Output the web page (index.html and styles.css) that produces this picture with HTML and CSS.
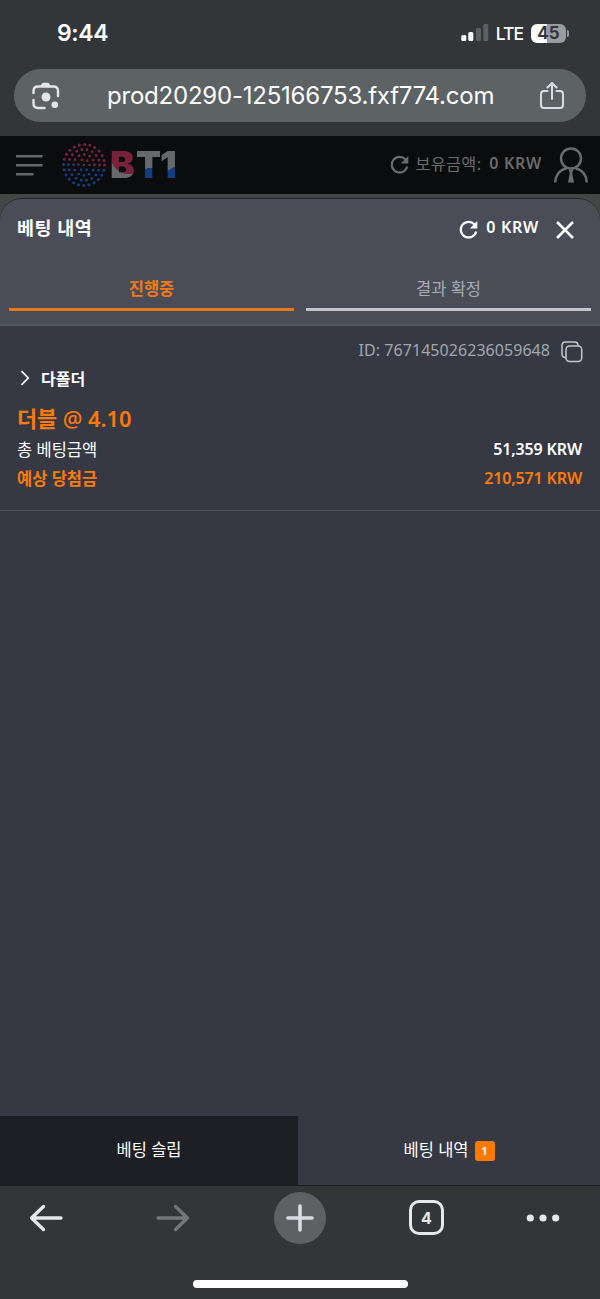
FILE: index.html
```html
<!DOCTYPE html>
<html lang="ko">
<head>
<meta charset="utf-8">
<title>베팅 내역</title>
<link rel="stylesheet" href="styles.css">
</head>
<body>
<header class="browser-top">
  <div class="status">
    <span class="clock">9:44</span>
    <div class="status-right">
      <svg class="signal" width="28" height="18" viewBox="0 0 28 18"><rect x="0.3" y="11" width="5" height="6" rx="1.5" fill="#fff"/><rect x="7.3" y="8" width="5" height="9" rx="1.5" fill="#fff"/><rect x="15" y="4" width="5" height="13" rx="1.5" fill="#5d6062"/><rect x="22.3" y="0" width="5" height="17" rx="1.5" fill="#5d6062"/></svg>
      <span class="lte">LTE</span>
      <span class="battery">45</span><i class="battery-tip"></i>
    </div>
  </div>
  <div class="address">
    <svg class="lens" width="28" height="28" viewBox="0 0 28 28" fill="none" stroke="#e3e5e9" stroke-width="2.4" stroke-linecap="round"><path d="M1.5 11V9q0-4.5 4.500-4.500h15.500q4.500 0 4.500 4.500v5M1.500 18v3.500q0 4.500 4.500 4.500h6.500"/><path d="M8 4.500l2-3q.4-.7 1-.7h5q.6 0 1 .7l2 3z" fill="#e3e5e9" stroke="none"/><circle cx="14" cy="15" r="4.500" fill="#e3e5e9" stroke="none"/><circle cx="22.800" cy="22.700" r="3.300" fill="#e3e5e9" stroke="none"/></svg>
    <span class="url">prod20290-125166753.fxf774.com</span>
    <svg class="share" width="24" height="28" viewBox="0 0 24 28" fill="none" stroke="#d9dce0" stroke-width="2" stroke-linecap="round" stroke-linejoin="round"><path d="M7.500 9H4q-3 0-3 3v11q0 3 3 3h16q3 0 3-3V12q0-3-3-3h-3.500M12 17V1.500M7.500 5.500 12 1l4.500 4.500"/></svg>
  </div>
</header>
<div class="site-header">
  <svg class="menu" width="27" height="22" viewBox="0 0 27 22" fill="#65676a"><path d="M0 0h26.500v2.500H0zM0 9h26.500v2.500H0zM0 18h17.500v2.500H0z"/></svg>
  <svg class="emblem" width="46" height="46" viewBox="0 0 46 46" fill="none" stroke="url(#flag)" stroke-linecap="round">
    <defs><linearGradient id="flag" gradientUnits="userSpaceOnUse" x1="25" y1="0" x2="21" y2="46"><stop offset=".5" stop-color="#78213c"/><stop offset=".5" stop-color="#123f7f"/></linearGradient></defs>
    <circle cx="23" cy="23" r="20.500" stroke-width="3" stroke-dasharray="0 5.367"/>
    <circle cx="23" cy="23" r="15.500" stroke-width="2.900" stroke-dasharray="0 5.410"/>
    <circle cx="23" cy="23" r="10.500" stroke-width="2.800" stroke-dasharray="0 5.498"/>
    <circle cx="23" cy="23" r="5.500" stroke-width="2.700" stroke-dasharray="0 5.760"/>
    <circle cx="23" cy="23" r=".7" stroke-width="1.300"/>
  </svg>
  <span class="wordmark"><span class="mark-b">B</span><span class="mark-t">T</span><span class="mark-1">1</span></span>
  <div class="balance">
    <svg width="19" height="19" viewBox="0 0 19 19" fill="none" stroke="#696b6d" stroke-width="2.200"><path d="M15.500 4.500A7.800 7.800 0 1 0 17.200 11.500"/><path d="M18.300 1v7.500h-7.500z" fill="#696b6d" stroke="none"/></svg>
    <span class="balance-label">보유금액:</span>
    <span class="balance-value">0 KRW</span>
  </div>
  <svg class="user" width="34" height="36" viewBox="0 0 34 36" fill="none" stroke="#696b6d" stroke-width="2.400"><circle cx="17" cy="11.500" r="10"/><path d="M1.300 35.500C1.500 28 6 22.500 12.500 21.500M32.700 35.500C32.500 28 28 22.500 21.500 21.500"/><path d="M14.500 22.500h5l-1.300 3.500 1.800 9.500h-6l1.800-9.500z" fill="#696b6d" stroke="none"/></svg>
</div>
<main class="backdrop">
  <section class="sheet">
    <div class="sheet-head">
      <h1>베팅 내역</h1>
      <svg class="refresh" width="19" height="19" viewBox="0 0 19 19" fill="none" stroke="#fff" stroke-width="2.200"><path d="M15.500 4.500A7.800 7.800 0 1 0 17.200 11.500"/><path d="M18.300 1v7.500h-7.500z" fill="#fff" stroke="none"/></svg>
      <span class="head-value">0 KRW</span>
      <svg class="close" width="18" height="18" viewBox="0 0 18 18" stroke="#fff" stroke-width="2.500"><path d="M1 1l16 16M17 1 1 17"/></svg>
    </div>
    <nav class="tabs"><span class="tab tab-on">진행중</span><span class="tab">결과 확정</span></nav>
    <article class="bet">
      <div class="bet-id"><span>ID: 767145026236059648</span>
        <svg width="22" height="22" viewBox="0 0 22 22" fill="none" stroke="#c5c6cb" stroke-width="1.500"><rect x="5" y="5" width="15.700" height="15.500" rx="3.500"/><path d="M5 16.500h-.5Q1 16.500 1 13V4.500Q1 1 4.500 1h9q3.500 0 3.500 3.500V5"/></svg></div>
      <div class="fold"><svg width="10" height="16" viewBox="0 0 10 16" fill="none" stroke="#fff" stroke-width="1.700"><path d="M1.500 1.200 8.200 8l-6.700 6.800"/></svg><span>다폴더</span></div>
      <div class="odds">더블 <span class="at">@</span> 4.10</div>
      <div class="row"><span class="row-label">총 베팅금액</span><b>51,359 KRW</b></div>
      <div class="row row-win"><span class="row-label">예상 당첨금</span><b>210,571 KRW</b></div>
    </article>
    <footer class="switch"><span class="slip">베팅 슬립</span><span class="history">베팅 내역<b class="count">1</b></span></footer>
  </section>
</main>
<div class="toolbar">
  <svg width="34" height="28" viewBox="0 0 34 28" fill="none" stroke="#e6e8eb" stroke-width="3.300" stroke-linecap="round" stroke-linejoin="round"><path d="M32 14H2.500M14.500 2.500 2.500 14l12 11.500"/></svg>
  <svg width="34" height="28" viewBox="0 0 34 28" fill="none" stroke="#747678" stroke-width="3.300" stroke-linecap="round" stroke-linejoin="round"><path d="M2 14h29.500M19.500 2.500l12 11.500-12 11.500"/></svg>
  <i class="plus"><svg width="28" height="28" viewBox="0 0 28 28" stroke="#d9dce0" stroke-width="3.600" stroke-linecap="round"><path d="M14 2v24M2 14h24"/></svg></i>
  <b class="tab-count">4</b>
  <svg width="34" height="10" viewBox="0 0 34 10" fill="#e6e8eb"><circle cx="4.300" cy="5" r="3.600"/><circle cx="17" cy="5" r="3.600"/><circle cx="29.700" cy="5" r="3.600"/></svg>
</div>
<div class="home"><i></i></div>
</body>
</html>
```
FILE: styles.css
```css
* { box-sizing: border-box; }
body { margin: 0; width: 600px; height: 1299px; overflow: hidden; display: flex; flex-direction: column; background: #333638; color: #fff; font-family: "Noto Sans", "Noto Sans CJK KR", sans-serif; white-space: nowrap; }
svg { display: block; flex: none; }
.browser-top { height: 136px; font-family: Inter, sans-serif; }
.status { height: 69px; padding: 0 31px 3px 57px; display: flex; align-items: center; justify-content: space-between; }
.clock { font-size: 23px; font-weight: 600; letter-spacing: -.4px; }
.status-right { display: flex; align-items: center; }
.lte { font-size: 17.500px; font-weight: 500; letter-spacing: -1px; margin: 1px 8px 0 7px; }
.battery { width: 35px; height: 19px; border-radius: 6px; background: linear-gradient(90deg, #fff 45%, #9b9c9e 45%); color: #333638; font-size: 17px; font-weight: 700; line-height: 19px; text-align: center; }
.battery-tip { width: 2px; height: 7px; margin-left: 1px; border-radius: 0 3px 3px 0; background: #9b9c9e; }
.address { height: 53px; margin: 0 14px; border-radius: 27px; background: #5d6265; display: flex; align-items: center; padding: 0 22px 0 18px; }
.url { margin: 0 auto 0 47px; font-size: 24px; line-height: 50px; letter-spacing: -.22px; }
.site-header { height: 58px; background: #0b0c0e; display: flex; align-items: center; padding: 0 12px 0 16px; color: #696b6d; }
.emblem { margin-left: 18px; }
.menu { margin-top: 1px; }
.wordmark { margin-left: 3px; display: flex; font: 900 37px/46px Inter, sans-serif; }
.wordmark span { color: transparent; -webkit-background-clip: text; background-clip: text; background-color: #66696b; }
.wordmark .mark-b { width: 26px; background-image: radial-gradient(circle at 19px 14px, #78213c 18px, transparent 18.500px); }
.wordmark .mark-t { width: 24px; background-image: radial-gradient(circle at 15px 38px, #123f7f 12px, transparent 12.500px); }
.wordmark .mark-1 { width: 18px; background-image: radial-gradient(circle at 18px 39px, #123f7f 14px, transparent 14.500px); }
.balance { margin-left: auto; display: flex; align-items: center; }
.balance svg { margin-bottom: 1px; }
.balance-label { font-size: 16.300px; letter-spacing: .3px; margin-left: 7px; padding-bottom: 4px; }
.balance-value { font-size: 16px; font-weight: 600; letter-spacing: .7px; margin-left: 8px; padding-bottom: 4px; }
.user { margin-left: 12px; }
.backdrop { height: 992px; padding-top: 4px; background: #454646; }
.sheet { height: 988px; border-top: 1px solid #24252a; border-radius: 22px 22px 0 0; background: #363944; display: flex; flex-direction: column; overflow: hidden; }
.sheet-head { height: 61px; background: #4a4d58; display: flex; align-items: center; padding: 0 26px 0 17px; }
.sheet-head h1 { margin: 0 auto 3px 0; font-size: 18.500px; letter-spacing: .5px; line-height: 30px; font-weight: 700; }
.head-value { font-size: 16px; font-weight: 600; letter-spacing: .7px; margin: 0 17px 5px 8px; }
.tabs { height: 66px; background: #4a4d58; border-bottom: 2px solid #535762; display: flex; gap: 12px; padding: 0 9px; }
.tab { flex: 1; height: 51px; border-bottom: 3px solid #c5c5c9; color: #a9abb2; font-size: 16.500px; line-height: 58px; text-align: center; }
.tab-on { color: #f17b14; border-color: #e87817; font-weight: 600; }
.bet { height: 185px; border-bottom: 1px solid #4c505a; padding: 12px 17px 0 17px; }
.bet-id { height: 26px; display: flex; justify-content: flex-end; align-items: center; gap: 11px; color: #a4a6ae; font-size: 16px; letter-spacing: .05px; }
.bet-id span { padding-bottom: 2px; }
.bet-id svg { margin-top: 1px; }
.fold { height: 30px; display: flex; align-items: center; gap: 11px; padding: 0 0 2px 3px; font-size: 16px; font-weight: 600; }
.odds { height: 40px; padding-top: 5px; font-size: 21.800px; line-height: 40px; font-weight: 600; color: #ff7b08; }
.at { font-weight: 500; }
.row { height: 29px; padding-right: 1px; display: flex; align-items: center; justify-content: space-between; font-size: 16px; }
.row-label { font-size: 16.500px; }
.row b { font-weight: 600; letter-spacing: -.15px; }
.row-win { color: #ff7b08; font-weight: 600; }
.switch { height: 70px; margin-top: auto; display: flex; font-size: 16.500px; border-bottom: 1px solid #1b1d20; }
.switch > span { display: flex; align-items: center; justify-content: center; padding-bottom: 4px; }
.slip { width: 298px; background: #1d1f24; }
.history { flex: 1; }
.count { width: 20px; height: 20px; margin: 4px 0 0 6px; border-radius: 3px; background: #ff7900; font-size: 11px; line-height: 20px; text-align: center; }
.toolbar { height: 63px; padding-left: 29px; display: flex; align-items: center; }
.toolbar svg + svg { margin-left: 93px; }
.plus { width: 52px; height: 52px; margin: 0 109px 0 84px; border-radius: 50%; background: #5d6164; display: grid; place-items: center; }
.tab-count { width: 35px; height: 35px; margin: 0 82px 0 0; border: 3px solid #e6e8eb; border-radius: 10px; font: 700 16px/30px Inter, sans-serif; text-align: center; color: #e6e8eb; }
.toolbar .plus { margin-right: 83px; }
.home { padding-top: 31px; display: flex; justify-content: center; }
.home i { width: 215px; height: 8px; border-radius: 4px; background: #fff; }
```
